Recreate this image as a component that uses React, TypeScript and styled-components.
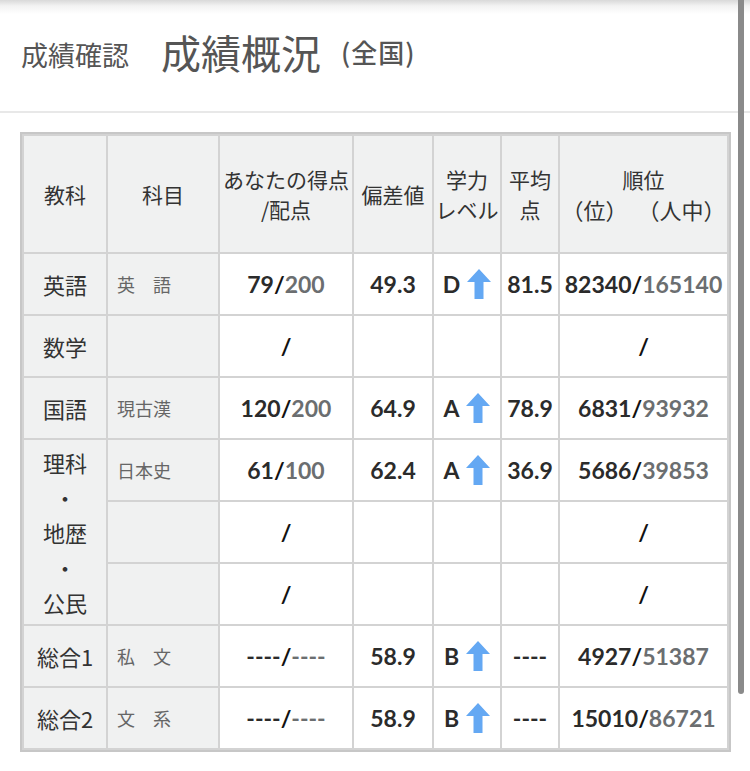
import React from "react";
import styled, { createGlobalStyle } from "styled-components";

const Global = createGlobalStyle`
  html, body { margin: 0; padding: 0; background: #fff; }
  body {
    font-family: "Noto Sans CJK JP", "Noto Sans", sans-serif;
    color: #333;
  }
`;

const Page = styled.div`
  position: relative;
  width: 750px;
  min-height: 771px;
  overflow: hidden;
`;

const Header = styled.header`
  box-sizing: border-box;
  height: 113px;
  display: flex;
  align-items: center;
  padding: 0 0 2px 21px;
  background: linear-gradient(to bottom, #d9d9d9 0px, #f3f3f3 6px, #fff 14px);
  border-bottom: 2px solid #e8e8e8;
`;

const Crumb = styled.span`
  font-size: 27px;
  color: #555;
`;

const Title = styled.h1`
  margin: 0 0 6px 32px;
  font-size: 40px;
  font-weight: 400;
  color: #555;
  line-height: 1;
`;

const Scope = styled.span`
  margin: 0 0 6px 20px;
  font-size: 26px;
  font-weight: 500;
  color: #555;
  letter-spacing: 1px;
`;

const Body = styled.main`
  padding: 19px 0 0 20px;
`;

const Grid = styled.table`
  table-layout: fixed;
  width: 711px;
  border-collapse: separate;
  border-spacing: 2px;
  background: #d3d3d3;
  border: 2px solid #c7c7c7;
`;

const HeadRow = styled.tr`
  height: 116px;
`;

const Row = styled.tr`
  height: 60px;
`;

const Th = styled.th`
  padding: 0;
  background: #f0f1f1;
  font-weight: 400;
  font-size: 21px;
  line-height: 30px;
  color: #333;
  text-align: center;
  vertical-align: middle;
`;

const Units = styled.span`
  display: inline-flex;
  gap: 10px;
  font-size: 22px;
`;

const Kyoka = styled.td<{ $stack?: boolean }>`
  padding: 0;
  background: #f0f1f1;
  font-size: 22px;
  line-height: ${(p) => (p.$stack ? "35px" : "30px")};
  color: #333;
  text-align: center;
  vertical-align: middle;
`;

const Kamoku = styled.td`
  padding: 0 0 0 9px;
  background: #f0f1f1;
  font-size: 18px;
  color: #666;
  text-align: left;
  vertical-align: middle;
  white-space: nowrap;
`;

const Cell = styled.td`
  padding: 0;
  background: #fff;
  font-family: Lato, "Liberation Sans", sans-serif;
  font-weight: 700;
  font-size: 23px;
  color: #2b2b2b;
  text-align: center;
  vertical-align: middle;
  white-space: nowrap;
`;

const Denom = styled.span`
  color: #6b6e70;
`;

const Slash = styled.span`
  color: #111;
`;

const Level = styled.span`
  display: inline-flex;
  align-items: center;
  gap: 7px;
`;

const Arrow = () => (
  <svg width="24" height="30" viewBox="0 0 24 30" aria-hidden="true">
    <path d="M12 0 L24 13 H16.5 V30 H7.5 V13 H0 Z" fill="#64a8f3" />
  </svg>
);

type RowData = {
  kyoka?: React.ReactNode;
  span?: number;
  kamoku: string;
  score: [string, string];
  dev: string;
  level: string;
  avg: string;
  rank: [string, string];
};

const rows: RowData[] = [
  { kyoka: "英語", kamoku: "英　語", score: ["79", "200"], dev: "49.3", level: "D", avg: "81.5", rank: ["82340", "165140"] },
  { kyoka: "数学", kamoku: "", score: ["", ""], dev: "", level: "", avg: "", rank: ["", ""] },
  { kyoka: "国語", kamoku: "現古漢", score: ["120", "200"], dev: "64.9", level: "A", avg: "78.9", rank: ["6831", "93932"] },
  {
    kyoka: (
      <>
        理科<br />・<br />地歴<br />・<br />公民
      </>
    ),
    span: 3,
    kamoku: "日本史",
    score: ["61", "100"],
    dev: "62.4",
    level: "A",
    avg: "36.9",
    rank: ["5686", "39853"],
  },
  { kamoku: "", score: ["", ""], dev: "", level: "", avg: "", rank: ["", ""] },
  { kamoku: "", score: ["", ""], dev: "", level: "", avg: "", rank: ["", ""] },
  { kyoka: "総合1", kamoku: "私　文", score: ["----", "----"], dev: "58.9", level: "B", avg: "----", rank: ["4927", "51387"] },
  { kyoka: "総合2", kamoku: "文　系", score: ["----", "----"], dev: "58.9", level: "B", avg: "----", rank: ["15010", "86721"] },
];

const Fraction = ({ v }: { v: [string, string] }) => (
  <>
    {v[0]}
    <Slash>/</Slash>
    <Denom>{v[1]}</Denom>
  </>
);

const Scrollbar = styled.div`
  position: absolute;
  top: 0;
  right: 6px;
  width: 6px;
  height: 694px;
  background: #8a8a8a;
  border-radius: 0 0 3px 3px;
`;

export default function App() {
  return (
    <Page>
      <Global />
      <Header>
        <Crumb>成績確認</Crumb>
        <Title>成績概況</Title>
        <Scope>(全国)</Scope>
      </Header>
      <Body>
        <Grid>
          <colgroup>
            <col style={{ width: 82 }} />
            <col style={{ width: 110 }} />
            <col style={{ width: 132 }} />
            <col style={{ width: 78 }} />
            <col style={{ width: 66 }} />
            <col style={{ width: 56 }} />
            <col style={{ width: 167 }} />
          </colgroup>
          <thead>
            <HeadRow>
              <Th>教科</Th>
              <Th>科目</Th>
              <Th>
                あなたの得点
                <br />/配点
              </Th>
              <Th>偏差値</Th>
              <Th>
                学力
                <br />
                レベル
              </Th>
              <Th>
                平均
                <br />点
              </Th>
              <Th>
                順位
                <br />
                <Units>
                  <span>（位）</span>
                  <span>（人中）</span>
                </Units>
              </Th>
            </HeadRow>
          </thead>
          <tbody>
            {rows.map((r, i) => (
              <Row key={i}>
                {r.kyoka !== undefined && (
                  <Kyoka rowSpan={r.span} $stack={!!r.span}>
                    {r.kyoka}
                  </Kyoka>
                )}
                <Kamoku>{r.kamoku}</Kamoku>
                <Cell>
                  <Fraction v={r.score} />
                </Cell>
                <Cell>{r.dev}</Cell>
                <Cell>
                  {r.level && (
                    <Level>
                      {r.level}
                      <Arrow />
                    </Level>
                  )}
                </Cell>
                <Cell>{r.avg}</Cell>
                <Cell>
                  <Fraction v={r.rank} />
                </Cell>
              </Row>
            ))}
          </tbody>
        </Grid>
      </Body>
      <Scrollbar />
    </Page>
  );
}
